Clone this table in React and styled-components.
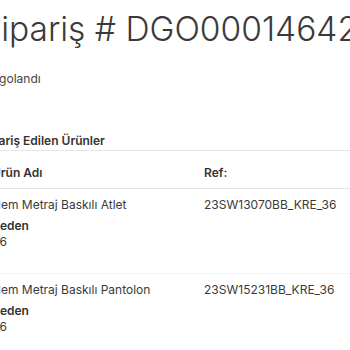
import React from 'react';
import styled, { createGlobalStyle } from 'styled-components';

const GlobalStyle = createGlobalStyle`
  html, body {
    margin: 0;
    padding: 0;
    background: #fff;
    overflow: hidden;
  }
  body {
    font-family: Inter, "Noto Sans", "Liberation Sans", sans-serif;
    color: #333;
  }
`;

const ORDER = {
  number: 'DGO0001464211',
  status: 'Kargolandı',
  items: [
    { id: 1, name: 'Hem Metraj Baskılı Atlet', ref: '23SW13070BB_KRE_36', size: '36' },
    { id: 2, name: 'Hem Metraj Baskılı Pantolon', ref: '23SW15231BB_KRE_36', size: '36' },
  ],
};

export default function App() {
  return (
    <>
      <GlobalStyle />
      <Page>
        <Title>Sipariş # {ORDER.number}</Title>
        <Status>{ORDER.status}</Status>
        <Section>
          <SectionTitle>Sipariş Edilen Ürünler</SectionTitle>
          <Table>
            <HeadRow>
              <HeadCell>Ürün Adı</HeadCell>
              <HeadCell>Ref:</HeadCell>
            </HeadRow>
            {ORDER.items.map((item) => (
              <Row key={item.id}>
                <Cell>
                  <Name>{item.name}</Name>
                  <SpecLabel>Beden</SpecLabel>
                  <SpecValue>{item.size}</SpecValue>
                </Cell>
                <Cell>
                  <Name>{item.ref}</Name>
                </Cell>
              </Row>
            ))}
          </Table>
        </Section>
      </Page>
    </>
  );
}

const Page = styled.div`
  width: 440px;
  margin-left: -20px;
  padding-top: 9px;
`;
const Title = styled.h1`
  margin: 0;
  font-size: 33.5px;
  font-weight: 300;
  line-height: 41px;
  color: #3a3a3a;
  white-space: nowrap;
`;
const Status = styled.div`
  margin-top: 21px;
  font-size: 12px;
  line-height: 16px;
  color: #444;
`;
const Section = styled.section`
  margin-top: 46px;
`;
const SectionTitle = styled.h3`
  margin: 0;
  padding-bottom: 1px;
  font-size: 12px;
  font-weight: 600;
  line-height: 16px;
  color: #333;
  border-bottom: 1px solid #e6e6e6;
`;
const Table = styled.div`
  margin-top: 4px;
  display: flex;
  flex-direction: column;
`;
const HeadRow = styled.div`
  display: grid;
  grid-template-columns: 212px 1fr;
  border-bottom: 1px solid #e3e3e3;
`;
const HeadCell = styled.div`
  padding: 10px 12px 7px;
  font-size: 12px;
  font-weight: 600;
  line-height: 16px;
  color: #333;
`;
const Row = styled.div`
  display: grid;
  grid-template-columns: 212px 1fr;
  border-bottom: 1px solid #f2f2f2;
`;
const Cell = styled.div`
  padding: 8px 12px 24px;
  display: flex;
  flex-direction: column;
`;
const Name = styled.div`
  font-size: 12px;
  line-height: 16px;
  color: #3a3a3a;
  white-space: nowrap;
`;
const SpecLabel = styled.div`
  margin-top: 5px;
  font-size: 12px;
  font-weight: 600;
  line-height: 16px;
  color: #333;
`;
const SpecValue = styled.div`
  font-size: 12px;
  line-height: 15px;
  color: #3a3a3a;
`;
